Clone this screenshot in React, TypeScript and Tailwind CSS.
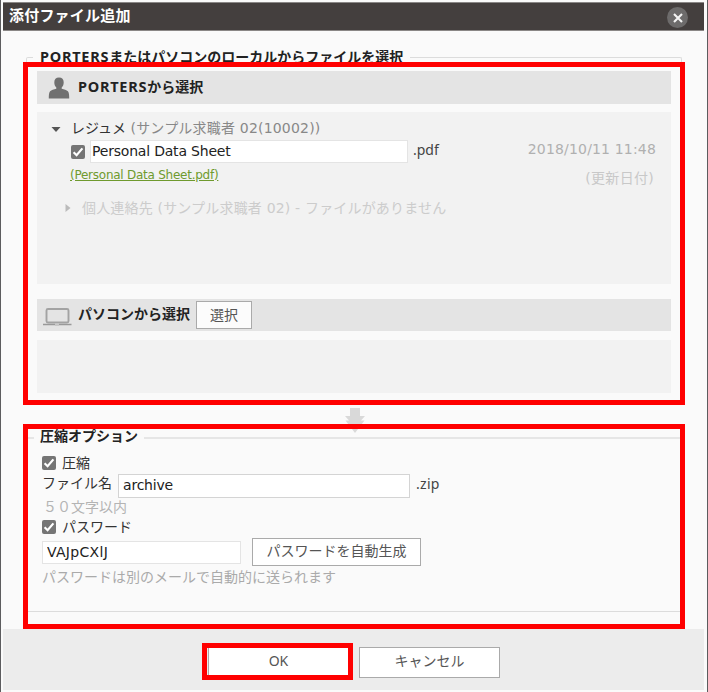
import React, { useState } from "react";
import clsx from "clsx";

const latin = "font-['Noto_Sans','Noto_Sans_CJK_JP',sans-serif]";
const wide = "font-['DejaVu_Sans','Noto_Sans_CJK_JP',sans-serif]";

export default function App() {
  return (
    <div className={clsx("relative w-[708px] h-[692px] overflow-hidden bg-[#fafafa] border-x border-[#5c5c5e] pt-[2px] px-[2px] text-[14px] text-[#333]", wide)}>
      <TitleBar />
      <main className="h-[598px] pl-[23px] pt-[26px]">
        <FileSourceView />
        <div className="h-[32px] pt-[3px] pl-[319px]">
          <ArrowDown />
        </div>
        <CompressView />
      </main>
      <Footer />

      <Highlight className="left-[22px] top-[62px] w-[662px] h-[343px]" />
      <Highlight className="left-[22px] top-[424px] w-[662px] h-[205px]" />
      <Highlight className="left-[201px] top-[643px] w-[151px] h-[37px]" />
    </div>
  );
}

function TitleBar() {
  return (
    <header className="flex justify-between w-[701px] h-[29px] bg-[#443f3e] border-y border-[#8a8786] pl-[6px] pr-[16px]">
      <h1 className="text-[15px] leading-[27px] font-bold text-white tracking-[0.2px]">添付ファイル追加</h1>
      <button className="mt-[4px] size-[21px] rounded-full bg-[#6d6b6b] flex items-center justify-center" aria-label="閉じる">
        <svg width="10" height="10" viewBox="0 0 10 10" fill="none" stroke="#f4f4f4" strokeWidth="2.1">
          <path d="M1 1 9 9M9 1 1 9" />
        </svg>
      </button>
    </header>
  );
}

function FileSourceView() {
  return (
    <section className="w-[656px] h-[348px] border border-[#dcdcdc] rounded-t-[2px] border-b-transparent px-[10px]">
      <h2 className={clsx("-mt-[12px] -ml-[4px] w-max h-[20px] px-[7px] leading-[20px] font-bold text-[#222] bg-[#fafafa]", latin)}>
        <span className="text-[14.5px] tracking-[0.75px]">PORTERS</span>またはパソコンのローカルからファイルを選択
      </h2>
      <div className="mt-[5px] h-[33px] w-[634px] bg-[#e4e4e4] flex items-center pl-[11px]">
        <PersonIcon />
        <span className={clsx("ml-[8px] -mt-[2px] leading-[32px] font-bold text-[#222]", latin)}>
          <span className="text-[14.5px] tracking-[0.75px]">PORTERS</span>から選択
        </span>
      </div>

      <div className="mt-[8px] h-[172px] w-[634px] bg-[#f2f2f2] pt-[7px] pl-[14px] pr-[15px]">
        <div className="flex items-center h-[21px] leading-[19px]">
          <svg width="10" height="6" viewBox="0 0 10 6" fill="#555"><path d="M0.500 0h9L5 5z" /></svg>
          <span className="ml-[10px] -mt-[2px] text-[#333]">レジュメ <span className="text-[#888] tracking-[0.2px]">(サンプル求職者 02(10002))</span></span>
        </div>
        <div className="flex h-[23px] pl-[20px]">
          <Checkbox className="mt-[5px]" />
          <input
            className="ml-[5px] w-[318px] h-[23px] bg-white border border-[#e4e4e4] px-px pb-[2px] tracking-[-0.2px] text-[#222] outline-none"
            defaultValue="Personal Data Sheet"
          />
          <span className={clsx("ml-[5px] leading-[19px] text-[#444]", latin)}>.pdf</span>
          <span className="ml-auto leading-[19px] text-[#b0b0b0] tracking-[0.17px]">2018/10/11 11:48</span>
        </div>
        <div className="flex h-[30px] justify-between pl-[19px] pr-[2px]">
          <a href="#" className="text-[12px] leading-[25px] text-[#6f9a2e] underline tracking-[-0.25px]">(Personal Data Sheet.pdf)</a>
          <span className="leading-[30px] text-[#c8c8c8] tracking-[0.3px]">(更新日付)</span>
        </div>
        <div className="flex items-center h-[30px] pl-[14px] text-[#ccc]">
          <svg width="6" height="8" viewBox="0 0 6 8" fill="#bbb"><path d="M0.500 0 5.5 4 0.500 8z" /></svg>
          <span className="ml-[11px] tracking-[0.18px]">個人連絡先 (サンプル求職者 02) - ファイルがありません</span>
        </div>
      </div>

      <div className="mt-[15px] h-[32px] w-[634px] bg-[#e4e4e4] flex items-center pl-[6px]">
        <LaptopIcon />
        <span className="ml-[6px] -mt-[2px] font-bold text-[#222] leading-[30px]">パソコンから選択</span>
        <button className="ml-[6px] w-[56px] h-[28px] border border-[#aaa] bg-[#fcfcfc] text-[#555] leading-[26px]">選択</button>
      </div>
      <div className="mt-[9px] h-[53px] w-[634px] bg-[#f2f2f2]" />
    </section>
  );
}

function CompressView() {
  return (
    <section className="w-[656px] h-[175px] border-t-2 border-b border-t-[#e6e6e6] border-b-[#dcdcdc] pl-[8px]">
      <h2 className="-mt-[12px] w-max h-[20px] px-[6px] leading-[19px] font-bold text-[#222] bg-[#fafafa]">圧縮オプション</h2>
      <label className="mt-[7px] h-[20px] pl-[8px] flex">
        <Checkbox className="mt-[2px]" />
        <span className="ml-[6px] leading-[18px]">圧縮</span>
      </label>
      <div className="flex h-[24px] pl-[8px]">
        <span className="w-[76px] leading-[18px]">ファイル名</span>
        <input
          className="w-[292px] h-[24px] bg-white border border-[#d4d4d4] px-[4px] pb-[2px] text-[#222] tracking-[-0.2px] outline-none"
          defaultValue="archive"
        />
        <span className={clsx("ml-[6px] leading-[19px] text-[#444] tracking-[0.3px]", latin)}>.zip</span>
      </div>
      <p className="h-[20px] pl-[9px] leading-[18px] text-[#b4b4b4]">５０文字以内</p>
      <label className="h-[20px] pl-[8px] flex">
        <Checkbox className="mt-[2px]" />
        <span className="ml-[6px] leading-[18px]">パスワード</span>
      </label>
      <div className="flex h-[28px] pl-[8px]">
        <input
          className="mt-[3px] w-[199px] h-[23px] bg-white border border-[#e4e4e4] px-[4px] pb-[2px] text-[#222] tracking-[0.3px] outline-none"
          defaultValue="VAJpCXlJ"
        />
        <button className="ml-[11px] w-[169px] h-[28px] border border-[#aaa] bg-white text-[#555] leading-[24px] flex justify-center">パスワードを自動生成</button>
      </div>
      <p className="pl-[8px] leading-[23px] text-[#aaa]">パスワードは別のメールで自動的に送られます</p>
    </section>
  );
}

function Footer() {
  return (
    <footer className="flex w-[701px] h-[61px] bg-[#ececec] pt-[18px] pl-[205px] text-[#555]">
      <button className={clsx("w-[141px] h-[31px] border border-[#aaa] bg-white leading-[26px] flex justify-center", latin)}>OK</button>
      <button className="ml-[10px] w-[141px] h-[31px] border border-[#aaa] bg-white leading-[26px] flex justify-center">キャンセル</button>
    </footer>
  );
}

function Checkbox({ className }: { className?: string }) {
  const [checked, setChecked] = useState(true);
  return (
    <button
      role="checkbox"
      aria-checked={checked}
      className={clsx("size-[14px] shrink-0 rounded-[2px] bg-[#757575]", className)}
      onClick={() => setChecked(!checked)}
    >
      {checked && (
        <svg width="14" height="14" viewBox="0 0 14 14" fill="none" stroke="#fff" strokeWidth="2.2">
          <path d="M2.6 7.2 5.6 10.2 11.4 3.4" />
        </svg>
      )}
    </button>
  );
}

function Highlight({ className }: { className: string }) {
  return <div className={clsx("absolute border-5 border-[#f00] pointer-events-none", className)} />;
}

function PersonIcon() {
  return (
    <svg width="22" height="22" viewBox="0 0 22 22" fill="#707070">
      <path d="M11 .5c3.100 0 4.700 1.900 4.700 4.800 0 2.400-.8 4.200-2 5.300v1.200c2.400.8 5 1.200 6.200 2.400 1.200 1.300 1.300 4 1.300 7.300H.8c0-3.300.1-6 1.300-7.300 1.200-1.200 3.800-1.600 6.200-2.400v-1.200c-1.200-1.100-2-2.900-2-5.300C6.300 2.400 7.900.5 11 .5z" />
    </svg>
  );
}

function LaptopIcon() {
  return (
    <svg width="29" height="19" viewBox="0 0 29 19" fill="none" className="mt-[3px]">
      <rect x="3.500" y="2" width="22" height="13.500" rx="1.500" stroke="#a3a3a3" strokeWidth="1.900" />
      <path d="M0 17.500h12M16 17.500h12.500" stroke="#999" strokeWidth="1.600" />
      <path d="M12 18h4" stroke="#aaa" strokeWidth="1" />
    </svg>
  );
}

function ArrowDown() {
  return (
    <svg width="20" height="25" viewBox="0 0 20 25" fill="#d9d9d9">
      <path d="M5 0h10v8h5l-4 4.500h3.500L10 25 .5 12.500H4L0 8h5z" />
    </svg>
  );
}
